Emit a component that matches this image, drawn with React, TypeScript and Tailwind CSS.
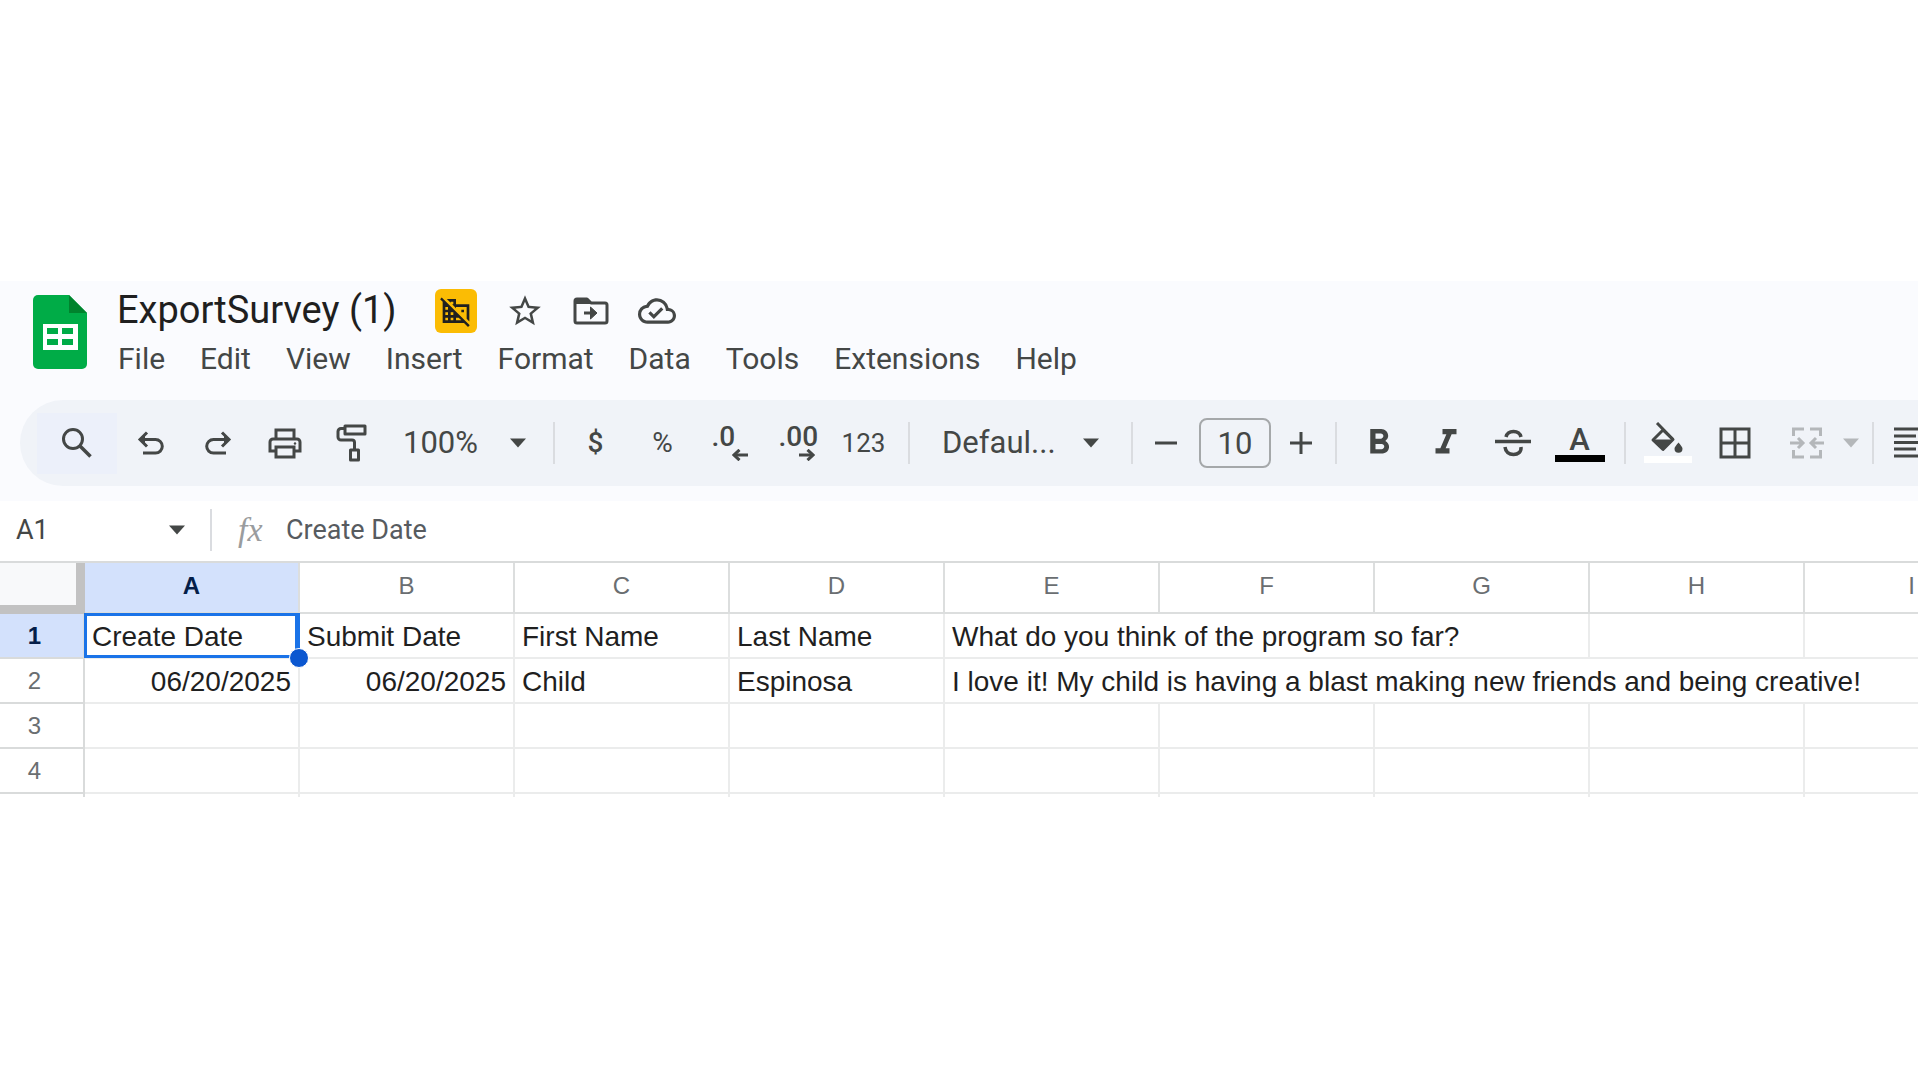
import React from 'react';
import {
  MdDomainDisabled,
  MdFormatBold,
  MdFormatItalic,
  MdOutlineCloudDone,
  MdStarBorder,
} from 'react-icons/md';

const MENUS = ['File', 'Edit', 'View', 'Insert', 'Format', 'Data', 'Tools', 'Extensions', 'Help'];

const COLUMNS = ['A', 'B', 'C', 'D', 'E', 'F', 'G', 'H', 'I'];

type Cell = { text?: string; span?: number; right?: boolean; selected?: boolean };

const ROWS: Cell[][] = [
  [
    { text: 'Create Date', selected: true },
    { text: 'Submit Date' },
    { text: 'First Name' },
    { text: 'Last Name' },
    { text: 'What do you think of the program so far?', span: 3 },
    {},
    {},
  ],
  [
    { text: '06/20/2025', right: true },
    { text: '06/20/2025', right: true },
    { text: 'Child' },
    { text: 'Espinosa' },
    { text: 'I love it! My child is having a blast making new friends and being creative!', span: 5 },
  ],
  COLUMNS.map(() => ({})),
  COLUMNS.map(() => ({})),
];

const Divider = ({ className = 'ml-[11px] mr-2' }: { className?: string }) => (
  <div className={`w-0.5 h-[42px] shrink-0 bg-[#dadce0] ${className}`} />
);

const Caret = ({ className = 'text-[#444746]' }: { className?: string }) => (
  <svg className={`shrink-0 ${className}`} width="18" height="10" viewBox="0 0 18 10" fill="currentColor">
    <path d="M1 0.500h16L9 9.500z" />
  </svg>
);

const ToolButton = ({ label, children }: { label: string; children: React.ReactNode }) => (
  <button aria-label={label} className="w-[67px] h-[61px] shrink-0 flex items-center justify-center">
    {children}
  </button>
);

const SheetsLogo = () => (
  <svg width="54" height="74" viewBox="0 0 54 74" className="shrink-0">
    <path d="M5 0h31l18 18v51a5 5 0 0 1-5 5H5a5 5 0 0 1-5-5V5a5 5 0 0 1 5-5z" fill="#00ac47" />
    <path d="M36 0l18 18H36z" fill="#00832d" />
    <path d="M10 29h35v26H10zM14 33v6h11v-6zM29 33v6h11v-6zM14 44v6h11v-6zM29 44v6h11v-6z" fill="#fff" fillRule="evenodd" />
  </svg>
);

const FolderMoveIcon = () => (
  <svg width="36" height="28" viewBox="0 0 36 28" fill="none" stroke="currentColor">
    <path d="M2 4a2 2 0 0 1 2-2h10l4 4h14a2 2 0 0 1 2 2v16a2 2 0 0 1-2 2H4a2 2 0 0 1-2-2z" strokeWidth="3" strokeLinejoin="round" />
    <path d="M3 2h11l4 4H3z" fill="currentColor" strokeWidth="2" />
    <path d="M11 16h8" strokeWidth="3" />
    <path d="M17.500 10l6.500 6-6.500 6z" fill="currentColor" />
  </svg>
);

const SearchIcon = () => (
  <svg width="32" height="32" viewBox="0 0 32 32" fill="none" stroke="currentColor" strokeWidth="3">
    <circle cx="12" cy="12" r="9.500" />
    <path d="M18.500 18.500l11 11" strokeWidth="3.500" />
  </svg>
);

const UndoIcon = ({ flip = false }: { flip?: boolean }) => (
  <svg width="28" height="26" viewBox="0 0 28 26" fill="none" stroke="currentColor" strokeWidth="3" className={flip ? '-scale-x-100' : ''}>
    <path d="M4 9.500h14.500a6.800 6.800 0 0 1 0 13.600H6" />
    <path d="M10 2.500L3 9.500l7 7" />
    <path d="M3 9.500l5-4.500v9z" fill="currentColor" strokeWidth="0" />
  </svg>
);

const PrintIcon = () => (
  <svg width="34" height="32" viewBox="0 0 34 32" fill="none" stroke="currentColor" strokeWidth="3">
    <path d="M8 12V3h18v9" />
    <path d="M7 24H2V15a3 3 0 0 1 3-3h24a3 3 0 0 1 3 3v9h-5" />
    <path d="M8 20h18v10H8z" />
    <circle cx="27" cy="16.500" r="1.200" fill="currentColor" strokeWidth="0" />
  </svg>
);

const PaintIcon = () => (
  <svg width="32" height="38" viewBox="0 0 32 38" fill="none" stroke="currentColor" strokeWidth="3">
    <path d="M9 2h20v8H9z" strokeLinejoin="round" />
    <path d="M9 4.500H5a3 3 0 0 0-3 3V13a3 3 0 0 0 3 3h11a2.500 2.500 0 0 1 2.500 2.500V26" />
    <path d="M14.500 26h8v10h-8z" strokeLinejoin="round" />
  </svg>
);

const SmallArrow = ({ flip = false }: { flip?: boolean }) => (
  <svg width="16" height="12" viewBox="0 0 16 12" fill="none" stroke="currentColor" strokeWidth="3" className={flip ? '-scale-x-100' : ''}>
    <path d="M16 6H3" />
    <path d="M7.500 0.800L2 6l5.500 5.200" />
  </svg>
);

const StrikeIcon = () => (
  <svg width="36" height="28" viewBox="0 0 36 28" fill="none" stroke="currentColor" strokeWidth="3.500">
    <path d="M0 12.500h36" />
    <path d="M11 8c1-4 4-5.500 7.500-5.500S25 4 26 8" />
    <path d="M10 18c.5 5 4 7.500 8.500 7.500s8-2.500 7.500-7.500" />
  </svg>
);

const FillIcon = () => (
  <svg width="50" height="42" viewBox="0 0 50 42">
    <path d="M14 1l16 16.500" stroke="#444746" strokeWidth="3" />
    <path d="M20 8L10 18l10 9.500L30 17.500z" fill="none" stroke="#444746" strokeWidth="3" strokeLinejoin="round" />
    <path d="M9.500 17.500h21L20 28z" fill="#444746" />
    <path d="M35.500 20.500c2.500 3 4 4.800 4 6.300a4 4 0 0 1-8 0c0-1.500 1.500-3.300 4-6.300z" fill="#444746" />
    <path d="M1 34h48v7H1z" fill="#fff" />
  </svg>
);

const BordersIcon = () => (
  <svg width="32" height="32" viewBox="0 0 32 32" fill="none" stroke="currentColor" strokeWidth="3">
    <path d="M2 2h28v28H2zM16 2v28M2 16h28" />
  </svg>
);

const MergeIcon = () => (
  <svg width="34" height="32" viewBox="0 0 34 32" fill="none" stroke="currentColor" strokeWidth="3">
    <path d="M14 2H3.500v7M20 2h10.500v7M14 30H3.500v-7M20 30h10.500v-7" />
    <path d="M0 16h12M8 11l5 5-5 5M34 16H22M26 11l-5 5 5 5" />
  </svg>
);

const AlignIcon = () => (
  <svg width="32" height="32" viewBox="0 0 32 32" fill="none" stroke="currentColor" strokeWidth="3">
    <path d="M0 2h32M0 9h22M0 15.500h32M0 22h22M0 29h32" />
  </svg>
);

const Header = () => (
  <header className="flex gap-[30px] pl-[33px] pt-2 h-[119px] text-[#444746]">
    <div className="pt-1.5">
      <SheetsLogo />
    </div>
    <div>
      <div className="flex items-center h-11">
        <h1 className="text-[38px] leading-[44px] pb-0.5 text-[#1f1f1f] whitespace-nowrap">ExportSurvey (1)</h1>
        <div className="flex items-center gap-[29px] ml-[38px]">
          <button aria-label="Outside organization" className="w-[42px] h-11 rounded-md bg-[#fbbc04] flex items-center justify-center text-[#202020]">
            <MdDomainDisabled size={32} />
          </button>
          <button aria-label="Star">
            <MdStarBorder size={38} />
          </button>
          <button aria-label="Move">
            <FolderMoveIcon />
          </button>
          <button aria-label="Saved to Drive">
            <MdOutlineCloudDone size={38} />
          </button>
        </div>
      </div>
      <nav className="flex gap-[35px] pt-1.5 pl-px">
        {MENUS.map((menu) => (
          <button key={menu} className="text-[30px] leading-[40px]">{menu}</button>
        ))}
      </nav>
    </div>
  </header>
);

const Toolbar = () => (
  <div className="ml-5 h-[86px] pl-[17px] rounded-l-full bg-[#f0f3f8] flex items-center overflow-hidden text-[#444746] text-[31px]">
    <button aria-label="Search menus" className="w-20 h-[61px] shrink-0 bg-[#ecf0fa] flex items-center justify-center">
      <SearchIcon />
    </button>
    <ToolButton label="Undo"><UndoIcon /></ToolButton>
    <ToolButton label="Redo"><UndoIcon flip /></ToolButton>
    <ToolButton label="Print"><PrintIcon /></ToolButton>
    <ToolButton label="Paint format"><PaintIcon /></ToolButton>

    <div className="flex items-center shrink-0 w-[168px] pl-[18px] gap-5">
      <select aria-label="Zoom" className="appearance-none bg-transparent w-[86px]">
        <option>100%</option>
      </select>
      <Caret />
    </div>
    <Divider className="mr-[7px]" />

    <ToolButton label="Format as currency"><span className="text-[28px] font-medium">$</span></ToolButton>
    <ToolButton label="Format as percent"><span className="text-[28px]">%</span></ToolButton>
    <ToolButton label="Decrease decimal places">
      <span className="flex flex-col w-[36px]">
        <span className="text-[28px] leading-[24px] font-medium text-left">.0</span>
        <span className="self-end"><SmallArrow /></span>
      </span>
    </ToolButton>
    <ToolButton label="Increase decimal places">
      <span className="flex flex-col w-[36px]">
        <span className="text-[28px] leading-[24px] font-medium text-left">.00</span>
        <span className="self-end"><SmallArrow flip /></span>
      </span>
    </ToolButton>
    <ToolButton label="More formats"><span className="text-[26px]">123</span></ToolButton>
    <Divider />

    <div className="flex items-center shrink-0 w-[213px] pl-6 gap-4">
      <select aria-label="Font" className="appearance-none bg-transparent w-[124px]">
        <option>Defaul...</option>
      </select>
      <Caret />
    </div>
    <Divider className="mx-0" />

    <button aria-label="Decrease font size" className="w-[66px] h-[61px] shrink-0 flex items-center justify-center">
      <svg width="22" height="22" viewBox="0 0 22 22" stroke="currentColor" strokeWidth="3"><path d="M0 11h22" /></svg>
    </button>
    <input aria-label="Font size" defaultValue="10" className="w-[72px] h-[50px] shrink-0 rounded-lg border-2 border-[#a5a8aa] text-center" />
    <button aria-label="Increase font size" className="w-[60px] h-[61px] shrink-0 flex items-center justify-center">
      <svg width="22" height="22" viewBox="0 0 22 22" stroke="currentColor" strokeWidth="3"><path d="M0 11h22M11 0v22" /></svg>
    </button>
    <Divider className="ml-1 mr-2" />

    <ToolButton label="Bold"><MdFormatBold size={42} /></ToolButton>
    <ToolButton label="Italic"><MdFormatItalic size={42} /></ToolButton>
    <ToolButton label="Strikethrough"><StrikeIcon /></ToolButton>
    <ToolButton label="Text color">
      <span className="flex flex-col items-center border-b-[7px] border-black w-[50px]">
        <span className="text-[31px] leading-[30px] font-medium">A</span>
      </span>
    </ToolButton>
    <Divider />

    <ToolButton label="Fill color"><FillIcon /></ToolButton>
    <ToolButton label="Borders"><BordersIcon /></ToolButton>
    <button aria-label="Merge cells" className="flex items-center gap-[18px] pl-[22px] pr-3 shrink-0 text-[#b4b7ba]">
      <MergeIcon />
      <Caret className="text-[#b4b7ba]" />
    </button>
    <Divider className="mr-5" />
    <button aria-label="Horizontal align" className="shrink-0"><AlignIcon /></button>
  </div>
);

const FormulaBar = () => (
  <div className="flex items-center h-[60px] pb-0.5 bg-white text-[27px]">
    <input aria-label="Name box" defaultValue="A1" className="w-[152px] ml-4 text-[#444746]" />
    <Caret />
    <Divider className="h-9 ml-6 mr-[26px]" />
    <span className="w-12 font-['Liberation_Serif',serif] italic text-[34px] leading-[40px] text-[#9a9c9e]">fx</span>
    <input aria-label="Formula" defaultValue="Create Date" className="flex-1 text-[#575b5f]" />
  </div>
);

const Grid = () => (
  <div className="overflow-hidden border-t-2 border-[#d9dbdb] bg-white">
    <table className="table-fixed w-[2020px] border-separate border-spacing-0 font-['Liberation_Sans',sans-serif]">
      <colgroup>
        <col className="w-[85px]" />
        {COLUMNS.map((col) => (
          <col key={col} className="w-[215px]" />
        ))}
      </colgroup>
      <thead>
        <tr className="h-[51px] text-2xl">
          <td className="bg-[#f8f9fa] border-r-[9px] border-b-[9px] border-[#c2c2c2] p-0" />
          {COLUMNS.map((col, i) => (
            <th
              key={col}
              scope="col"
              className={`p-0 pb-1 border-r-2 border-b-2 border-[#dcdede] ${i === 0 ? 'bg-[#d3e1fc] text-[#041e49] font-bold' : 'text-[#6a6e71] font-normal'}`}
            >
              {col}
            </th>
          ))}
        </tr>
      </thead>
      <tbody>
        {ROWS.map((row, r) => (
          <tr key={r} className="h-[45px]">
            <th
              scope="row"
              className={`p-0 pr-3.5 text-2xl leading-[28px] border-r-2 border-b-2 border-[#d9dbdb] ${r === 0 ? 'bg-[#d3e1fc] text-[#041e49] font-bold' : 'text-[#6a6e71] font-normal'}`}
            >
              {r + 1}
            </th>
            {row.map((cell, c) => (
              <td
                key={c}
                colSpan={cell.span}
                className={`relative p-0 pt-0.5 px-[7px] text-[28px] leading-[32px] text-[#1f1f1f] whitespace-nowrap border-r-2 border-b-2 border-[#ebecec] ${cell.right ? 'text-right' : ''}`}
              >
                {cell.text}
                {cell.selected && (
                  <>
                    <span className="absolute -top-px -left-px -right-0.5 -bottom-px border-[3px] border-r-[5px] border-[#1a73e8]" />
                    <span className="absolute z-10 -right-[11px] -bottom-[11px] size-5 rounded-full bg-[#0b57d0] border border-white" />
                  </>
                )}
              </td>
            ))}
          </tr>
        ))}
        <tr className="h-[3px]">
          <td className="p-0 border-r-2 border-[#d9dbdb]" />
          {COLUMNS.map((col) => (
            <td key={col} className="p-0 border-r-2 border-[#ebecec]" />
          ))}
        </tr>
      </tbody>
    </table>
  </div>
);

export default function App() {
  return (
    <div className="min-h-screen bg-white flex items-center pb-0.5 pr-0.5 font-['Roboto',sans-serif]">
      <main className="w-full min-w-0">
        <div className="bg-[#fafbfe] pb-[15px]">
          <Header />
          <Toolbar />
        </div>
        <FormulaBar />
        <Grid />
      </main>
    </div>
  );
}
